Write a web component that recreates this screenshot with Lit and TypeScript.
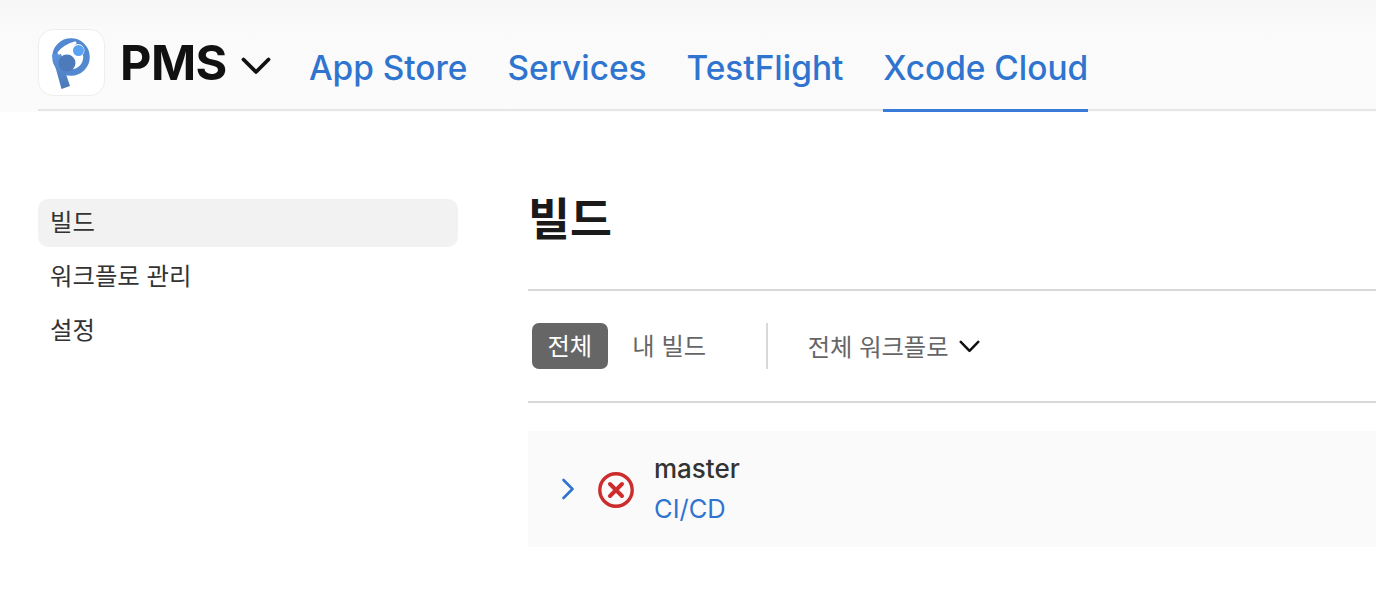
import { LitElement, css, html } from 'lit';
import { customElement } from 'lit/decorators.js';

const chevronDown = (width: number, height: number, stroke: number) => html`
    <svg class="chevron" width=${width} height=${height} viewBox="0 0 30 18" preserveAspectRatio="none" fill="none"
        stroke="currentColor" stroke-width=${stroke} stroke-linecap="round" stroke-linejoin="round">
        <path d="M2.500 2.500L15 15 27.500 2.500"></path>
    </svg>
`;

@customElement('app-root')
export class AppRoot extends LitElement {
    render() {
        return html`
        <header class="top">
            <div class="bar">
                <div class="logo">
                    <svg width="65" height="65" viewBox="1 1 65 65">
                        <defs>
                            <linearGradient id="logo-grad" x1="0" y1="0" x2="0" y2="1">
                                <stop offset="0" stop-color="#5c95df"></stop>
                                <stop offset="1" stop-color="#4a78b5"></stop>
                            </linearGradient>
                        </defs>
                        <circle cx="33" cy="28" r="15.500" fill="none" stroke="#5288d0" stroke-width="6.500"></circle>
                        <path fill="url(#logo-grad)" d="M14 26l9.500 34 8.500-3-6-18 4-3-8-12z"></path>
                        <circle cx="29" cy="34" r="8.500" fill="#4c7abb"></circle>
                        <path fill="none" stroke="#fff" stroke-width="3" stroke-linecap="round" d="M21 24c4-5 9-8 16-10"></path>
                        <circle cx="40" cy="21.500" r="6.500" fill="#fff"></circle>
                        <circle cx="40.500" cy="21.500" r="5.500" fill="#5aa2f2"></circle>
                    </svg>
                </div>
                <button class="app-name">PMS <span class="name-icon">${chevronDown(30, 18, 3.800)}</span></button>
                <nav class="tabs">
                    <a class="tab">App Store</a>
                    <a class="tab">Services</a>
                    <a class="tab">TestFlight</a>
                    <a class="tab active">Xcode Cloud</a>
                </nav>
            </div>
        </header>
        <div class="page">
            <aside class="side">
                <a class="side-item selected">빌드</a>
                <a class="side-item">워크플로 관리</a>
                <a class="side-item">설정</a>
            </aside>
            <main class="main">
                <h1 class="title">빌드</h1>
                <div class="filters">
                    <span class="pill on">전체</span>
                    <span class="pill">내 빌드</span>
                    <span class="sep"></span>
                    <span class="workflow">전체 워크플로 <span class="wf-icon">${chevronDown(21, 13, 3.600)}</span></span>
                </div>
                <div class="row">
                    <svg class="expand" width="14" height="22" viewBox="0 0 14 22" fill="none" stroke="#2f74cf"
                        stroke-width="2.600" stroke-linecap="round" stroke-linejoin="round">
                        <path d="M2.500 2L11.500 11 2.500 20"></path>
                    </svg>
                    <svg class="status" width="36" height="36" viewBox="0 0 36 36" fill="none" stroke="#cc2c2c">
                        <circle cx="18" cy="18" r="16.200" stroke-width="3.400"></circle>
                        <path d="M12 12l12 12M24 12L12 24" stroke-width="4" stroke-linecap="round"></path>
                    </svg>
                    <div class="row-text">
                        <span class="branch">master</span>
                        <a class="product">CI/CD</a>
                    </div>
                </div>
            </main>
        </div>
        `;
    }

    static override styles = css`
        :host {
            display: block;
            height: 613px;
            overflow: hidden;
            background: #fff;
            font-family: Inter, "Noto Sans CJK KR", "Liberation Sans", sans-serif;
            color: #333;
        }

        .top {
            height: 112px;
            padding-left: 38px;
            background: linear-gradient(#f7f7f7, #fafafa 30px, #fbfbfb);
            box-sizing: border-box;
        }

        .bar {
            display: flex;
            align-items: flex-end;
            height: 111px;
            box-sizing: border-box;
            border-bottom: 2px solid #e6e6e6;
        }

        .logo {
            display: flex;
            align-items: center;
            justify-content: center;
            width: 67px;
            height: 67px;
            margin-bottom: 13px;
            background: #fff;
            border: 1px solid #eeeeee;
            border-radius: 15px;
            box-sizing: border-box;
        }

        .app-name {
            display: flex;
            align-items: center;
            gap: 14px;
            height: 68px;
            margin: 0 0 12px 15px;
            padding: 0;
            border: 0;
            background: none;
            font: 700 48.500px/68px Inter, "Liberation Sans", sans-serif;
            letter-spacing: -0.500px;
            color: #111;
        }

        .name-icon {
            display: flex;
            margin-top: 5px;
        }

        .chevron {
            flex: none;
        }

        .tabs {
            display: flex;
            gap: 40px;
            margin-left: 38px;
            margin-bottom: -3px;
        }

        .tab {
            display: block;
            height: 82px;
            box-sizing: border-box;
            padding-top: 17px;
            font-size: 33.400px;
            line-height: 42px;
            font-weight: 500;
            color: #2f74cf;
        }

        .tab.active {
            border-bottom: 3px solid #3a7bd9;
        }

        .page {
            display: flex;
            align-items: flex-start;
            padding-left: 38px;
        }

        .side {
            flex: none;
            display: flex;
            flex-direction: column;
            gap: 6px;
            width: 420px;
            margin-top: 87px;
        }

        .side-item {
            height: 48px;
            padding-left: 12px;
            font-size: 24.400px;
            line-height: 46px;
            border-radius: 10px;
            color: #333;
        }

        .side-item.selected {
            background: #f2f2f2;
        }

        .main {
            flex: 1;
            min-width: 0;
            margin-left: 70px;
        }

        .title {
            height: 179px;
            margin: 0;
            padding-top: 77px;
            box-sizing: border-box;
            border-bottom: 2px solid #d9d9d9;
            font-size: 45.600px;
            line-height: 62px;
            font-weight: 700;
            color: #1a1a1a;
        }

        .filters {
            display: flex;
            align-items: center;
            height: 112px;
            padding-left: 4px;
            box-sizing: border-box;
            border-bottom: 2px solid #d9d9d9;
            font-size: 24.300px;
            color: #666;
        }

        .pill {
            height: 46px;
            padding: 0 15.500px;
            margin-right: 9px;
            line-height: 46px;
            border-radius: 7px;
        }

        .pill.on {
            background: #666;
            color: #fff;
        }

        .sep {
            width: 2px;
            height: 46px;
            margin: 0 40px 0 35px;
            background: #d9d9d9;
        }

        .workflow {
            display: flex;
            align-items: center;
            gap: 10px;
            margin-bottom: 2px;
        }

        .wf-icon {
            display: flex;
            margin-top: 2px;
            color: #111;
        }

        .row {
            display: flex;
            align-items: center;
            height: 116px;
            margin-top: 28px;
            padding-left: 33px;
            background: #fafafa;
        }

        .status {
            margin-left: 23px;
            margin-top: 2px;
        }

        .row-text {
            display: flex;
            flex-direction: column;
            margin-left: 20px;
            font-size: 25.500px;
            line-height: 40px;
        }

        .branch {
            font-weight: 500;
            font-size: 26px;
            color: #333;
        }

        .product {
            color: #2f74cf;
        }
    `;
}

declare global {
    interface HTMLElementTagNameMap {
        'app-root': AppRoot;
    }
}
